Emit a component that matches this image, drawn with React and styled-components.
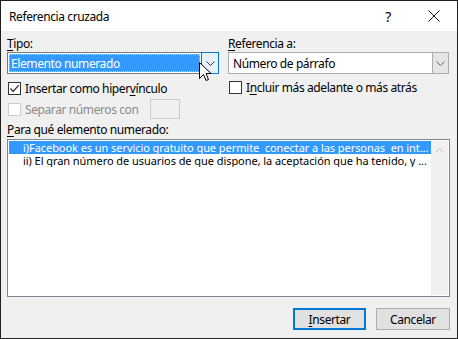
import React from 'react'
import styled, {createGlobalStyle} from 'styled-components'

const Global = createGlobalStyle`
  html, body { margin: 0; padding: 0; background: #ffffff; }
  body { font-family: "Noto Sans", "Open Sans", sans-serif; font-size: 12px; letter-spacing: -0.4px; color: #000; }
`

const Dialog = styled.div`
  position: relative;
  width: 458px;
  height: 339px;
  box-sizing: border-box;
  border: 1px solid #1f1f1f;
  background: #f0f0f0;
  display: flex;
  flex-direction: column;
`

const TitleBar = styled.div`
  height: 30px;
  background: #ffffff;
  display: flex;
  align-items: center;
  padding-left: 8px;
  font-size: 12px;
`

const Title = styled.span`
  flex: 1;
`

const TitleButton = styled.span`
  width: 46px;
  display: flex;
  justify-content: center;
  font-size: ${p => p.$size || 13}px;
`

const Body = styled.div`
  flex: 1;
  padding: 4px 7px 0 6px;
  display: flex;
  flex-direction: column;
`

const Columns = styled.div`
  display: grid;
  grid-template-columns: 212px 221px;
  column-gap: 9px;
`

const Column = styled.div`
  display: flex;
  flex-direction: column;
`

const Label = styled.div`
  line-height: 17px;
  color: ${p => (p.$disabled ? '#8a8a8a' : '#000')};
  white-space: pre;
`

const Key = styled.span`
  text-decoration: underline;
  text-underline-offset: 2px;
`

const Combo = styled.div`
  height: 22px;
  box-sizing: border-box;
  border: 1px solid ${p => (p.$focus ? '#7a7a7a' : '#adadad')};
  background: #ffffff;
  display: flex;
  padding: ${p => (p.$focus ? '1px' : '0')};
`

const ComboText = styled.div`
  flex: 1;
  display: flex;
  align-items: center;
  padding-left: ${p => (p.$selected ? '2px' : '4px')};
  background: ${p => (p.$selected ? '#3399ff' : 'transparent')};
  color: ${p => (p.$selected ? '#ffffff' : '#000')};
  outline: ${p => (p.$selected ? '1px dotted #ffcc66' : 'none')};
  outline-offset: -1px;
`

const ComboButton = styled.div`
  width: 16px;
  box-sizing: border-box;
  display: flex;
  align-items: center;
  justify-content: center;
  background: #e5e5e5;
  border-left: 1px solid #adadad;
  ${p => p.$hover && 'background: #e5f1fb; border: 1px solid #0078d7; margin: -2px -2px -2px 1px; width: 18px;'}
`

const CheckRow = styled.label`
  display: flex;
  align-items: center;
  gap: 4px;
  height: ${p => p.$tall || 17}px;
  margin-top: ${p => p.$mt || 0}px;
  color: ${p => (p.$disabled ? '#8a8a8a' : '#000')};
`

const Box = styled.span`
  width: 13px;
  height: 13px;
  box-sizing: border-box;
  border: 1px solid ${p => (p.$disabled ? '#cccccc' : '#333333')};
  background: #ffffff;
  display: flex;
  align-items: center;
  justify-content: center;
  margin-left: 1px;
`

const SmallInput = styled.span`
  width: 30px;
  height: 20px;
  box-sizing: border-box;
  border: 1px solid #cccccc;
  background: #f0f0f0;
  margin-left: 7px;
`

const ListLabel = styled(Label)`
  margin-top: 1px;
`

const ListBox = styled.div`
  margin-top: 1px;
  height: 158px;
  width: 443px;
  box-sizing: border-box;
  border: 1px solid #828790;
  background: #ffffff;
  display: flex;
  padding: 1px;
`

const Rows = styled.div`
  flex: 1;
  display: flex;
  flex-direction: column;
  min-width: 0;
`

const Row = styled.div`
  height: 13px;
  line-height: 13px;
  font-size: 11px;
  letter-spacing: -0.06px;
  padding-left: 14px;
  white-space: pre;
  overflow: hidden;
  background: ${p => (p.$selected ? '#3399ff' : 'transparent')};
  color: ${p => (p.$selected ? '#ffffff' : '#000')};
`

const ScrollBar = styled.div`
  width: 17px;
  background: #f0f0f0;
  display: flex;
  justify-content: center;
  padding-top: 7px;
`

const Footer = styled.div`
  display: flex;
  justify-content: flex-end;
  gap: 10px;
  margin-top: 11px;
`

const Button = styled.div`
  width: ${p => p.$w}px;
  height: 22px;
  box-sizing: border-box;
  display: flex;
  align-items: center;
  justify-content: center;
  background: #e1e1e1;
  border: ${p => (p.$default ? '2px solid #0078d7' : '1px solid #adadad')};
`

const Cursor = styled.svg`
  position: absolute;
  left: 198px;
  top: 61px;
`

const Chevron = ({color = '#606060', up}) => (
  <svg width="9" height="5" viewBox="0 0 9 5">
    <path d={up ? 'M0.5 4.5 L4.5 0.5 L8.5 4.5' : 'M0.5 0.5 L4.5 4.5 L8.5 0.5'} fill="none" stroke={color} strokeWidth="1" />
  </svg>
)

const Check = () => (
  <svg width="11" height="11" viewBox="0 0 11 11">
    <path d="M1.5 5.5 L4.2 8.3 L9.8 2.2" fill="none" stroke="#222" strokeWidth="1.2" />
  </svg>
)

export default function App() {
  return (
    <>
      <Global />
      <Dialog>
        <TitleBar>
          <Title>Referencia cruzada</Title>
          <TitleButton $size={14}>?</TitleButton>
          <TitleButton>
            <svg width="12" height="12" viewBox="0 0 12 12">
              <path d="M0.5 0.5 L11.5 11.5 M11.5 0.5 L0.5 11.5" stroke="#111" strokeWidth="1" />
            </svg>
          </TitleButton>
        </TitleBar>
        <Body>
          <Columns>
            <Column>
              <Label><Key>T</Key>ipo:</Label>
              <Combo $focus>
                <ComboText $selected>Elemento numerado</ComboText>
                <ComboButton $hover><Chevron color="#333" /></ComboButton>
              </Combo>
              <CheckRow $mt={4} $tall={20}>
                <Box><Check /></Box>
                <span>Insertar como hiper<Key>v</Key>ínculo</span>
              </CheckRow>
              <CheckRow $disabled $tall={22}>
                <Box $disabled />
                <span>Separar números con</span>
                <SmallInput />
              </CheckRow>
            </Column>
            <Column>
              <Label><Key>R</Key>eferencia a:</Label>
              <Combo>
                <ComboText>Número de párrafo</ComboText>
                <ComboButton><Chevron /></ComboButton>
              </Combo>
              <CheckRow $mt={3} $tall={20}>
                <Box />
                <span>I<Key>n</Key>cluir más adelante o más atrás</span>
              </CheckRow>
            </Column>
          </Columns>
          <ListLabel><Key>P</Key>ara qué elemento numerado:</ListLabel>
          <ListBox>
            <Rows>
              <Row $selected>{'i)Facebook es un servicio gratuito que permite  conectar a las personas  en int...'}</Row>
              <Row>{'ii) El gran número de usuarios de que dispone, la aceptación que ha tenido, y ...'}</Row>
            </Rows>
            <ScrollBar>
              <Chevron color="#c0c0c0" up />
            </ScrollBar>
          </ListBox>
          <Footer>
            <Button $default $w={73}><span><Key>I</Key>nsertar</span></Button>
            <Button $w={74}>Cancelar</Button>
          </Footer>
        </Body>
        <Cursor width="13" height="20" viewBox="0 0 13 20">
          <path d="M0.5 0.5 L0.5 16.5 L4.5 12.5 L7 18.5 L9.5 17.5 L7 11.5 L12 11.5 Z" fill="#fff" stroke="#000" strokeWidth="1" strokeLinejoin="miter" />
        </Cursor>
      </Dialog>
    </>
  )
}
